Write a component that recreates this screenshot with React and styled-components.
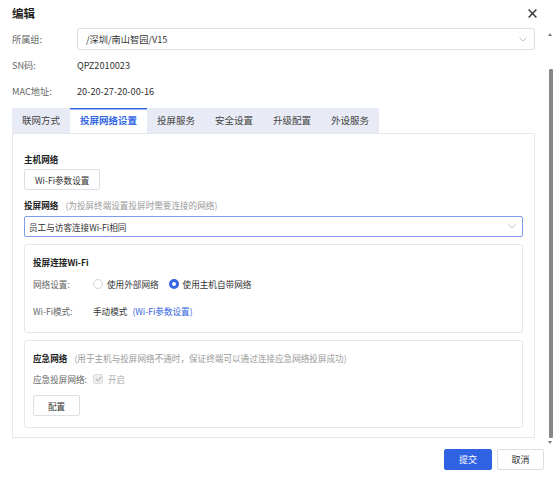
import React, { useLayoutEffect, useRef } from 'react';
import styled, { createGlobalStyle } from 'styled-components';

const GlobalStyle = createGlobalStyle`
  html, body { margin: 0; padding: 0; background: #fff; }
  body {
    font-family: "Noto Sans CJK SC", "Noto Sans", sans-serif;
    font-size: 8.6px;
    color: #333;
  }
  * { box-sizing: border-box; }
`;

const Dialog = styled.div`
  width: 554px;
  height: 478px;
  display: flex;
  flex-direction: column;
  background: #fff;
`;

const Header = styled.div`
  height: 28px;
  flex: none;
  display: flex;
  align-items: center;
  justify-content: space-between;
  padding: 0 17px 2px 12px;
`;

const Title = styled.div`
  font-size: 11.5px;
  font-weight: bold;
  color: #1f1f1f;
  line-height: 14px;
`;

const Close = styled.div`
  width: 9px;
  height: 9px;
  display: flex;
`;

const Main = styled.div`
  height: 418px;
  flex: none;
  display: flex;
`;

const Body = styled.div`
  flex: 1;
  overflow: hidden;
`;

const Inner = styled.div`
  padding: 10px 10px 8px 12px;
`;

const ScrollTrack = styled.div`
  width: 9px;
  flex: none;
  display: flex;
  flex-direction: column;
  padding: 5px 0 2px 0;
  background: #fff;
`;

const Arrow = styled.div`
  width: 0;
  height: 0;
  margin-left: 3px;
  border-left: 2.5px solid transparent;
  border-right: 2.5px solid transparent;
  ${p => (p.$down ? 'border-top: 3px solid #7a7a7a;' : 'border-bottom: 3px solid #7a7a7a;')}
`;

const Thumb = styled.div`
  flex: 1;
  width: 4px;
  margin: 33px 0 3px 4px;
  background: #878787;
  border-radius: 1px;
`;

const FieldRow = styled.div`
  display: flex;
  align-items: center;
  height: 26px;
  font-size: 9.2px;
`;

const FieldLabel = styled.div`
  width: ${p => p.$w || 65}px;
  flex: none;
  color: #666;
  white-space: nowrap;
`;

const FieldValue = styled.div`
  color: #333;
  white-space: nowrap;
`;

const SelectBox = styled.div`
  flex: 1;
  height: ${p => p.$h || 22}px;
  border: 1px solid ${p => (p.$focus ? '#7f9cea' : '#dcdfe6')};
  border-radius: 2px;
  padding: 0 ${p => p.$pr || 7}px 0 ${p => p.$pl || 8}px;
  display: flex;
  align-items: center;
  justify-content: space-between;
  color: #333;
  background: #fff;
`;

const TabBar = styled.div`
  margin-top: 4px;
  display: flex;
  width: fit-content;
  background: #e8ebf5;
`;

const Tab = styled.div`
  height: 25px;
  line-height: 25px;
  padding: 0 10px;
  font-size: 9.5px;
  white-space: nowrap;
  color: ${p => (p.$active ? '#3567e3' : '#444')};
  background: ${p => (p.$active ? '#fff' : 'transparent')};
  font-weight: ${p => (p.$active ? 600 : 'normal')};
  box-shadow: ${p => (p.$active ? 'inset 0 1.5px 0 #3567e3' : 'none')};
`;

const Panel = styled.div`
  border: 1px solid #e5e7ef;
  padding: 18px 11px 9px 11px;
`;

const SectionTitle = styled.div`
  line-height: 14px;
  font-weight: bold;
  color: #222;
  white-space: nowrap;
  margin-top: ${p => p.$mt || 0}px;
  margin-bottom: ${p => p.$mb || 0}px;
`;

const Hint = styled.span`
  font-weight: normal;
  color: #9a9a9a;
  margin-left: 7px;
`;

const Button = styled.button`
  height: 21px;
  width: ${p => (p.$w ? `${p.$w}px` : 'auto')};
  padding: 0 ${p => (p.$w ? 0 : 10)}px;
  border: 1px solid ${p => (p.$primary ? '#2f63e4' : '#dcdfe6')};
  background: ${p => (p.$primary ? '#2f63e4' : '#fff')};
  color: ${p => (p.$primary ? '#fff' : '#333')};
  font-family: inherit;
  font-size: ${p => p.$fs || 8.6}px;
  border-radius: 2px;
  display: block;
  cursor: pointer;
`;

const Card = styled.div`
  border: 1px solid #e5e7ef;
  border-radius: 3px;
  margin-top: 7px;
  padding: 10px 8px 11px 8px;
`;

const FormRow = styled.div`
  display: flex;
  align-items: center;
  height: ${p => p.$h || 20}px;
  margin-top: ${p => p.$mt || 0}px;
`;

const Radios = styled.div`
  display: flex;
  align-items: center;
  gap: 10px;
`;

const RadioItem = styled.label`
  display: flex;
  align-items: center;
  gap: 4px;
  color: #333;
`;

const RadioDot = styled.span`
  width: 10px;
  height: 10px;
  border-radius: 50%;
  border: ${p => (p.$checked ? '3px solid #3567e3' : '1px solid #d4d6dc')};
  background: #fff;
`;

const Link = styled.span`
  color: #3567e3;
  margin-left: 5px;
`;

const CheckWrap = styled.label`
  display: flex;
  align-items: center;
  gap: 5px;
  color: #aaa;
`;

const CheckBox = styled.span`
  width: 10px;
  height: 10px;
  border: 1px solid #dcdcdc;
  border-radius: 2px;
  background: #eeeeee;
  display: flex;
  align-items: center;
  justify-content: center;
`;

const Footer = styled.div`
  height: 32px;
  flex: none;
  display: flex;
  justify-content: flex-end;
  align-items: flex-start;
  gap: 5px;
  padding: 3px 10px 0 0;
`;

const Chevron = () => (
  <svg width="8" height="5" viewBox="0 0 8 5">
    <path d="M0.5 0.5 L4 4 L7.5 0.5" fill="none" stroke="#b5b5b5" strokeWidth="0.9" />
  </svg>
);

export default function App() {
  const bodyRef = useRef(null);

  useLayoutEffect(() => {
    if (bodyRef.current) bodyRef.current.scrollTop = bodyRef.current.scrollHeight;
  }, []);

  const tabs = ['联网方式', '投屏网络设置', '投屏服务', '安全设置', '升级配置', '外设服务'];

  return (
    <>
      <GlobalStyle />
      <Dialog>
        <Header>
          <Title>编辑</Title>
          <Close>
            <svg width="9" height="9" viewBox="0 0 9 9">
              <path d="M0.6 0.6 L8.4 8.4 M8.4 0.6 L0.6 8.4" stroke="#333" strokeWidth="1.4" />
            </svg>
          </Close>
        </Header>

        <Main>
          <Body ref={bodyRef}>
            <Inner>
              <FieldRow>
                <FieldLabel>所属组:</FieldLabel>
                <SelectBox>
                  <span>/深圳/南山智园/V15</span>
                  <Chevron />
                </SelectBox>
              </FieldRow>
              <FieldRow>
                <FieldLabel>SN码:</FieldLabel>
                <FieldValue>QPZ2010023</FieldValue>
              </FieldRow>
              <FieldRow>
                <FieldLabel>MAC地址:</FieldLabel>
                <FieldValue>20-20-27-20-00-16</FieldValue>
              </FieldRow>

              <TabBar>
                {tabs.map((t, i) => (
                  <Tab key={t} $active={i === 1}>{t}</Tab>
                ))}
              </TabBar>

              <Panel>
                <SectionTitle $mb={3}>主机网络</SectionTitle>
                <Button>Wi-Fi参数设置</Button>

                <SectionTitle $mt={8} $mb={4}>
                  投屏网络<Hint>(为投屏终端设置投屏时需要连接的网络)</Hint>
                </SectionTitle>
                <SelectBox $h={21} $focus $pl={4} $pr={6}>
                  <span>员工与访客连接Wi-Fi相同</span>
                  <Chevron />
                </SelectBox>

                <Card>
                  <SectionTitle $mb={5}>投屏连接Wi-Fi</SectionTitle>
                  <FormRow>
                    <FieldLabel $w={60}>网络设置:</FieldLabel>
                    <Radios>
                      <RadioItem><RadioDot />使用外部网络</RadioItem>
                      <RadioItem><RadioDot $checked />使用主机自带网络</RadioItem>
                    </Radios>
                  </FormRow>
                  <FormRow $mt={7}>
                    <FieldLabel $w={60}>Wi-Fi模式:</FieldLabel>
                    <FieldValue>手动模式</FieldValue>
                    <Link>(Wi-Fi参数设置)</Link>
                  </FormRow>
                </Card>

                <Card>
                  <SectionTitle $mb={4}>
                    应急网络<Hint>(用于主机与投屏网络不通时，保证终端可以通过连接应急网络投屏成功)</Hint>
                  </SectionTitle>
                  <FormRow>
                    <FieldLabel $w={60}>应急投屏网络:</FieldLabel>
                    <CheckWrap>
                      <CheckBox>
                        <svg width="7" height="6" viewBox="0 0 7 6">
                          <path d="M0.8 3 L2.8 5 L6.2 0.8" fill="none" stroke="#b8b8b8" strokeWidth="1.1" />
                        </svg>
                      </CheckBox>
                      开启
                    </CheckWrap>
                  </FormRow>
                  <FormRow $mt={6} $h={21}>
                    <Button $w={47}>配置</Button>
                  </FormRow>
                </Card>
              </Panel>
            </Inner>
          </Body>
          <ScrollTrack>
            <Arrow />
            <Thumb />
            <Arrow $down />
          </ScrollTrack>
        </Main>

        <Footer>
          <Button $primary $w={48} $fs={9}>提交</Button>
          <Button $w={47} $fs={9}>取消</Button>
        </Footer>
      </Dialog>
    </>
  );
}
